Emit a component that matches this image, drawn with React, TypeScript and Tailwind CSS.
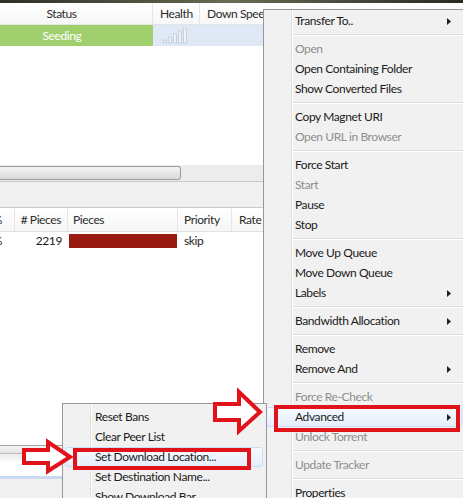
import React from "react";

type MI = { t: string; d?: boolean; s?: boolean; h?: boolean } | null;

const mainItems: MI[] = [
  { t: "Transfer To..", s: true },
  null,
  { t: "Open", d: true },
  { t: "Open Containing Folder" },
  { t: "Show Converted Files" },
  null,
  { t: "Copy Magnet URI" },
  { t: "Open URL in Browser", d: true },
  null,
  { t: "Force Start" },
  { t: "Start", d: true },
  { t: "Pause" },
  { t: "Stop" },
  null,
  { t: "Move Up Queue" },
  { t: "Move Down Queue" },
  { t: "Labels", s: true },
  null,
  { t: "Bandwidth Allocation", s: true },
  null,
  { t: "Remove" },
  { t: "Remove And", s: true },
  null,
  { t: "Force Re-Check", d: true },
  { t: "Advanced", s: true, h: true },
  { t: "Unlock Torrent", d: true },
  null,
  { t: "Update Tracker", d: true },
  null,
  { t: "Properties" },
];

const subItems: { t: string; h?: boolean }[] = [
  { t: "Reset Bans" },
  { t: "Clear Peer List" },
  { t: "Set Download Location...", h: true },
  { t: "Set Destination Name..." },
  { t: "Show Download Bar" },
];

function SubArrow() {
  return (
    <svg className="absolute right-[14px] top-[7px]" width="4" height="7" viewBox="0 0 4 7">
      <path d="M0 0 L4 3.5 L0 7 Z" fill="#1f1f1f" />
    </svg>
  );
}

function MenuRow({ t, d, s, h, pl }: { t: string; d?: boolean; s?: boolean; h?: boolean; pl: string }) {
  return (
    <div className="relative h-5 flex items-center">
      {h && (
        <div className="absolute inset-y-0 left-[2px] right-[3px] rounded-[3px] border border-[#c9ddf6] bg-linear-to-b from-[#f6f9fe] to-[#e4eefb]" />
      )}
      <span className={`relative whitespace-nowrap ${pl} ${d ? "text-[#8e8e8e]" : "text-[#1b1b1b]"}`}>{t}</span>
      {s && <SubArrow />}
    </div>
  );
}

function Sep() {
  return (
    <div className="h-2 flex flex-col justify-center ml-[29px] mr-[2px]">
      <div className="h-px bg-[#dcdcdc]" />
      <div className="h-px bg-white" />
    </div>
  );
}

function HealthIcon() {
  return (
    <svg width="26" height="16" viewBox="0 0 26 16">
      {[0, 1, 2, 3, 4].map((i) => {
        const hgt = 3 + i * 3;
        return (
          <rect
            key={i}
            x={1.5 + i * 5}
            y={15 - hgt}
            width="3"
            height={hgt}
            fill="#edf2f8"
            stroke="#c8d0da"
            strokeWidth="1"
          />
        );
      })}
    </svg>
  );
}

export default function App() {
  return (
    <div className="relative w-[463px] h-[498px] overflow-hidden bg-white font-['Lato','Liberation_Sans',sans-serif] text-[12px] tracking-[-0.4px] text-[#1b1b1b] select-none">
      {/* base window */}
      <div className="flex flex-col">
        <div className="h-[3px] bg-linear-to-r from-[#2f2f26] via-[#6b6a55] to-[#2a2a25]" />
        {/* upper header */}
        <div className="h-[22px] flex items-stretch bg-linear-to-b from-white to-[#f7f7f7] border-b border-[#e3e3e3] text-[#2b2b2b]">
          <div className="w-[153px] pr-[29px] flex items-center justify-center border-r border-[#e6e6e6]">Status</div>
          <div className="w-[47px] pl-[7px] flex items-center border-r border-[#e6e6e6]">Health</div>
          <div className="flex-1 pl-[7px] flex items-center whitespace-nowrap">Down Speed</div>
        </div>
        {/* seeding row */}
        <div className="h-[21px] flex">
          <div className="w-[153px] pr-[29px] flex items-center justify-center bg-[#a0cf6e] text-white">Seeding</div>
          <div className="flex-1 bg-[#dfe9f6] pl-[9px] flex items-center">
            <HealthIcon />
          </div>
        </div>
        <div className="h-[119px]" />
        {/* upper scrollbar */}
        <div className="h-[16px] flex bg-[#ececec]">
          <div className="w-[181px] h-[14px] mt-px rounded-r-[3px] border border-l-0 border-[#9c9c9c] bg-linear-to-b from-[#f3f3f3] to-[#d9d9d9]" />
          <div className="flex-1" />
        </div>
        {/* gray band */}
        <div className="h-[27px] bg-[#f0f0f0] border-t border-[#8e8e8e] border-b border-[#c9c9c9]" />
        {/* lower header */}
        <div className="h-[24px] flex items-stretch bg-linear-to-b from-white to-[#f6f6f6] border-b border-[#e3e3e3] text-[#2b2b2b]">
          <div className="w-[15px] flex items-center justify-end pr-[12px] border-r border-[#e6e6e6] overflow-hidden whitespace-nowrap">
            100%
          </div>
          <div className="w-[53px] flex items-center justify-end pr-[6px] border-r border-[#e6e6e6] whitespace-nowrap"># Pieces</div>
          <div className="w-[110px] flex items-center pl-[5px] border-r border-[#e6e6e6]">Pieces</div>
          <div className="w-[54px] flex items-center pl-[6px] border-r border-[#e6e6e6]">Priority</div>
          <div className="flex-1 flex items-center pl-[7px]">Rate</div>
        </div>
        {/* file row */}
        <div className="h-[18px] flex items-stretch">
          <div className="w-[15px] flex items-center justify-end pr-[13px] overflow-hidden whitespace-nowrap">
            100%
          </div>
          <div className="w-[53px] flex items-center justify-end pr-[6px]">2219</div>
          <div className="w-[110px] flex items-center pl-px">
            <div className="w-[108px] h-[14px] bg-[#981a10]" />
          </div>
          <div className="w-[54px] flex items-center pl-[6px]">skip</div>
          <div className="flex-1" />
        </div>
        <div className="h-[195px]" />
        {/* bottom scrollbar */}
        <div className="h-[16px] flex flex-col border-t border-[#a3a3a3]">
          <div className="h-[7px] bg-linear-to-b from-[#f5f5f5] to-[#e3e3e3]" />
          <div className="h-px bg-[#bdbdbd]" />
          <div className="flex-1 bg-linear-to-b from-[#ebebeb] to-[#f7f7f7]" />
        </div>
        <div className="h-[15px] bg-white" />
        <div className="h-[3px] bg-[#c8daf0]" />
        <div className="h-[19px] bg-[#f0f0f0]" />
      </div>

      {/* main context menu */}
      <div className="absolute left-[263px] top-[9px] w-[203px] h-[495px] border border-[#979797] bg-[#f1f1f1] pt-px">
        <div className="absolute top-0 bottom-0 left-[27px] w-px bg-[#e0e0e0]" />
        <div className="absolute top-0 bottom-0 left-[28px] w-px bg-white" />
        {mainItems.map((it, i) =>
          it ? <MenuRow key={i} {...it} pl="pl-[31px]" /> : <Sep key={i} />
        )}
      </div>

      {/* advanced submenu */}
      <div className="absolute left-[62px] top-[403px] w-[205px] h-[110px] border border-[#979797] bg-[#f1f1f1] pt-[3px]">
        <div className="absolute top-0 bottom-0 left-[27px] w-px bg-[#e0e0e0]" />
        <div className="absolute top-0 bottom-0 left-[28px] w-px bg-white" />
        {subItems.map((it, i) => (
          <MenuRow key={i} t={it.t} h={it.h} pl="pl-[32px]" />
        ))}
      </div>

      {/* annotation arrows */}
      <svg className="absolute inset-0 pointer-events-none" width="463" height="498" viewBox="0 0 463 498">
        <polygon
          points="24,450 48,450 48,442 70,457 48,471 48,463 24,463"
          fill="white"
          stroke="#e2121b"
          strokeWidth="4"
          strokeLinejoin="miter"
        />
        <polygon
          points="215,404 239,404 239,392 260,412 239,431 239,420 215,420"
          fill="white"
          stroke="#e2121b"
          strokeWidth="4"
          strokeLinejoin="miter"
        />
      </svg>

      {/* annotation boxes */}
      <div className="absolute left-[274px] top-[405px] w-[186px] h-[27px] border-4 border-[#e2121b]" />
      <div className="absolute left-[73px] top-[448px] w-[178px] h-[22px] border-4 border-[#e2121b]" />
    </div>
  );
}
